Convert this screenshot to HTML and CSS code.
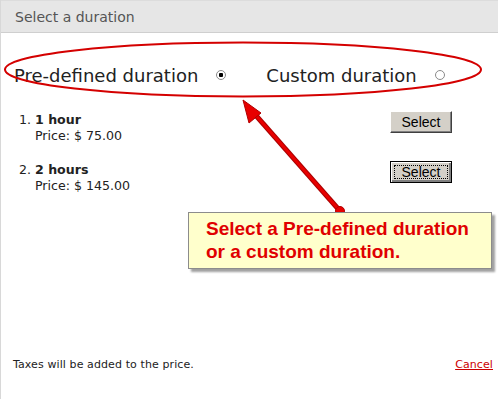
FILE: index.html
```html
<!DOCTYPE html>
<html lang="en">
  <head>
    <meta charset="UTF-8" />
    <title>Select a duration</title>
    <link rel="stylesheet" href="styles.css">
  </head>
  <body>
    <div class="dialog">
      <div class="title">Select a duration</div>

      <div class="choice">
        <label class="option">Pre-defined duration <input type="radio" name="kind" checked /></label>
        <label class="option">Custom duration <input type="radio" name="kind" /></label>
      </div>

      <ol class="durations">
        <li class="duration">
          <div class="info">
            <strong>1 hour</strong>
            <div>Price: $ 75.00</div>
          </div>
          <button class="btn">Select</button>
        </li>
        <li class="duration">
          <div class="info">
            <strong>2 hours</strong>
            <div>Price: $ 145.00</div>
          </div>
          <button class="btn focused">Select</button>
        </li>
      </ol>

      <div class="footer">
        <span>Taxes will be added to the price.</span>
        <a href="#">Cancel</a>
      </div>

      <!-- annotation on top of the screenshot -->
      <svg class="marks" width="498" height="399" viewBox="0 0 498 399">
        <ellipse cx="243" cy="69.5" rx="238" ry="27" fill="none" stroke="#d40000" stroke-width="2" />
        <line x1="340" y1="211" x2="252" y2="111" stroke="#a80000" stroke-width="5" />
        <line x1="340" y1="211" x2="252" y2="111" stroke="#e80000" stroke-width="3" />
        <polygon points="243,100 261,113 249,123" fill="#e80000" stroke="#b00000" stroke-width="1" />
        <circle cx="340" cy="211" r="4.5" fill="#e80000" stroke="#b00000" stroke-width="1" />
      </svg>

      <div class="callout">
        Select a Pre-defined duration<br />
        or a custom duration.
      </div>
    </div>
  </body>
</html>
```

FILE: styles.css
```css
body {
  margin: 0;
  background: #fff;
  font-family: "DejaVu Sans", Verdana, sans-serif;
  color: #222;
}

.dialog {
  position: relative;
  display: flex;
  flex-direction: column;
  height: 399px;
  border-left: 1px solid #d8d8d8;
  box-sizing: border-box;
}

.title {
  height: 33px;
  line-height: 33px;
  padding-left: 14px;
  background: #e6e6e6;
  border-top: 1px solid #dcdcdc;
  border-bottom: 1px solid #cfcfcf;
  box-sizing: border-box;
  font-size: 14px;
  color: #555;
}

.choice {
  display: flex;
  gap: 40px;
  margin-top: 31px;
  padding-left: 13px;
  height: 22px;
  align-items: center;
}

.option {
  display: flex;
  align-items: center;
  font-size: 18px;
  color: #222;
}

.option input {
  appearance: none;
  -webkit-appearance: none;
  box-sizing: border-box;
  width: 10px;
  height: 10px;
  margin: 0 0 0 18px;
  border: 1px solid #8a8a8a;
  border-radius: 50%;
  background: #fff;
}

.option input:checked {
  background: radial-gradient(circle, #000 0 2px, #fff 2.5px);
}

.durations {
  margin: 26px 0 0;
  padding-left: 34px;
  font-size: 12.6px;
  line-height: 16px;
}

.duration {
  margin-bottom: 18px;
}

.info {
  display: inline-block;
  vertical-align: top;
}

.btn {
  float: right;
  margin: -1px 46px 0 0;
  width: 62px;
  height: 22px;
  padding: 0;
  font-family: "Liberation Sans", Arial, sans-serif;
  font-size: 14px;
  color: #000;
  background: #d4d0c8;
  border: 1px solid;
  border-color: #fff #404040 #404040 #fff;
  box-shadow: inset -1px -1px 0 #808080;
}

.btn.focused {
  border: 1px solid #000;
  box-shadow: inset 1px 1px 0 #fff, inset -2px -2px 0 #808080;
  outline: 1px dotted #000;
  outline-offset: -5px;
}

.footer {
  margin-top: auto;
  display: flex;
  justify-content: space-between;
  padding: 0 5px 28px 12px;
  font-size: 11px;
  letter-spacing: 0.1px;
}

.footer a {
  color: #cc0000;
}

.marks {
  position: absolute;
  left: -1px;
  top: 0;
  pointer-events: none;
}

.callout {
  position: absolute;
  left: 187px;
  top: 212px;
  width: 304px;
  height: 57px;
  box-sizing: border-box;
  padding: 4px 0 0 17px;
  background: #ffffcc;
  border: 1px solid #8c8c8c;
  box-shadow: 3px 3px 2px #a0a0a0;
  font-family: "Liberation Sans", Arial, sans-serif;
  font-weight: bold;
  font-size: 19px;
  line-height: 23px;
  color: #e00000;
}
```
